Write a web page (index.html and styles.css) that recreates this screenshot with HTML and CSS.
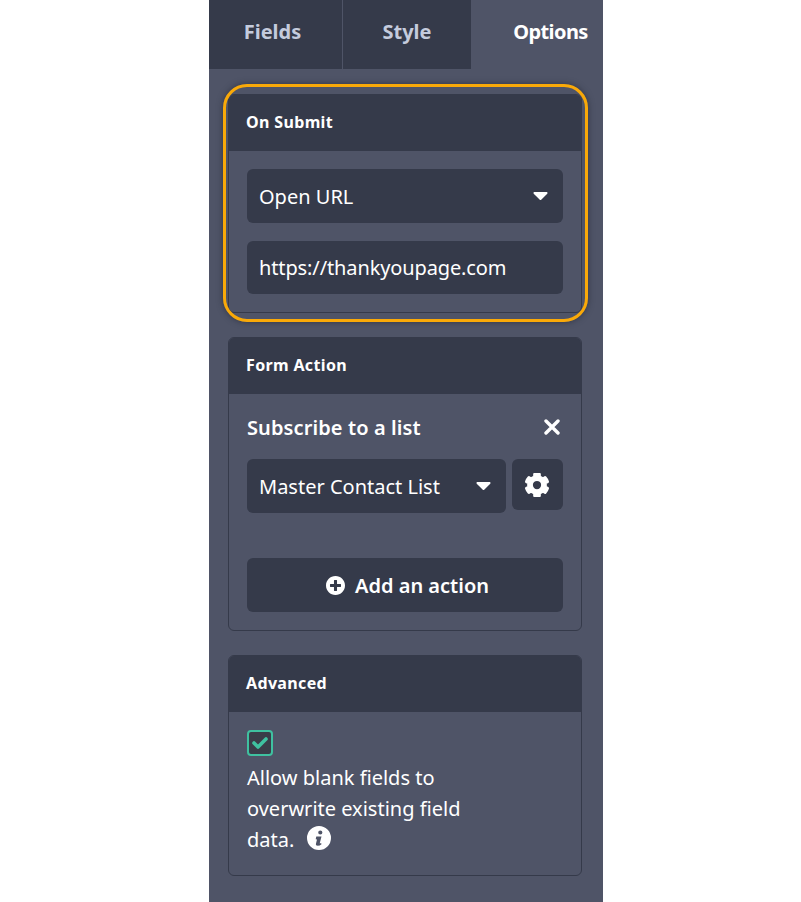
FILE: index.html
```html
<!DOCTYPE html>
<html lang="en">
  <head>
    <meta charset="UTF-8" />
    <meta name="viewport" content="width=device-width, initial-scale=1.0" />
    <title>Form Options</title>
    <link rel="stylesheet" href="styles.css">
  </head>
  <body>
    <div class="panel">
      <div class="tabs">
        <div class="tab tab-fields">Fields</div>
        <div class="tab tab-style">Style</div>
        <div class="tab tab-options">Options</div>
      </div>

      <div class="cards">
        <section class="card">
          <h3 class="card-title">On Submit</h3>
          <div class="card-body">
            <div class="field field-select">
              <span>Open URL</span>
              <svg class="caret" viewBox="0 0 16 9"><path d="M1.2 0h13.6c1 0 1.5 1.2.8 1.9L8.8 8.6c-.5.5-1.200.5-1.600 0L.4 1.900C-.3 1.200.2 0 1.200 0z"/></svg>
            </div>
            <div class="field field-url">https://thankyoupage.com</div>
          </div>
          <div class="highlight"></div>
        </section>

        <section class="card">
          <h3 class="card-title">Form Action</h3>
          <div class="card-body card-body-action">
            <div class="action-head">
              <strong>Subscribe to a list</strong>
              <svg class="icon-times" viewBox="0 0 16 16"><path d="M2 2l12 12M14 2L2 14"/></svg>
            </div>
            <div class="action-row">
              <div class="field field-select field-list">
                <span>Master Contact List</span>
                <svg class="caret" viewBox="0 0 16 9"><path d="M1.2 0h13.600c1 0 1.500 1.200.8 1.900L8.800 8.600c-.5.5-1.200.5-1.600 0L.4 1.900C-.3 1.200.2 0 1.200 0z"/></svg>
              </div>
              <div class="gear-btn">
                <svg class="icon-gear" viewBox="0 0 512 512"><path d="M487.4 315.7l-42.6-24.6c4.3-23.2 4.3-47 0-70.2l42.6-24.6c4.9-2.8 7.1-8.6 5.5-14-11.1-35.6-30-67.8-54.7-94.6-3.8-4.1-10-5.1-14.8-2.3L380.800 110c-17.900-15.400-38.500-27.300-60.800-35.100V25.800c0-5.600-3.900-10.500-9.400-11.700-36.700-8.200-74.300-7.800-109.200 0-5.500 1.200-9.400 6.100-9.400 11.700V75c-22.200 7.900-42.800 19.800-60.800 35.100L88.700 85.500c-4.900-2.800-11-1.900-14.800 2.300-24.700 26.700-43.600 58.900-54.700 94.600-1.700 5.400.6 11.200 5.500 14L67.300 221c-4.300 23.200-4.300 47 0 70.200l-42.600 24.600c-4.900 2.800-7.100 8.600-5.500 14 11.100 35.600 30 67.800 54.700 94.600 3.800 4.100 10 5.100 14.800 2.300l42.600-24.600c17.900 15.400 38.500 27.300 60.800 35.100v49.200c0 5.600 3.900 10.500 9.400 11.700 36.700 8.200 74.300 7.800 109.200 0 5.500-1.200 9.400-6.100 9.400-11.700v-49.200c22.200-7.900 42.800-19.800 60.800-35.100l42.600 24.600c4.900 2.800 11 1.900 14.800-2.300 24.700-26.700 43.600-58.900 54.700-94.600 1.500-5.500-.7-11.300-5.600-14.100zM256 362c-58.500 0-106-47.500-106-106s47.500-106 106-106 106 47.500 106 106-47.500 106-106 106z"/></svg>
              </div>
            </div>
            <div class="add-btn">
              <svg class="icon-plus" viewBox="8 8 496 496"><path d="M256 8C119 8 8 119 8 256s111 248 248 248 248-111 248-248S393 8 256 8zm144 276c0 6.600-5.400 12-12 12h-92v92c0 6.600-5.400 12-12 12h-56c-6.600 0-12-5.400-12-12v-92h-92c-6.600 0-12-5.400-12-12v-56c0-6.600 5.400-12 12-12h92v-92c0-6.600 5.400-12 12-12h56c6.600 0 12 5.400 12 12v92h92c6.600 0 12 5.400 12 12v56z"/></svg>
              <span>Add an action</span>
            </div>
          </div>
        </section>

        <section class="card">
          <h3 class="card-title">Advanced</h3>
          <div class="card-body card-body-advanced">
            <div class="checkbox">
              <svg class="icon-check" viewBox="0 0 16 12"><path d="M2 6l4 4 8-8"/></svg>
            </div>
            <p class="check-label">
              Allow blank fields to<br>overwrite existing field<br>data.
              <svg class="icon-info" viewBox="0 0 24 24"><path fill-rule="evenodd" d="M12 0a12 12 0 1 0 0 24 12 12 0 0 0 0-24zM13.300 4.400a2.100 2.100 0 1 1 0 4.200 2.100 2.100 0 0 1 0-4.200zM9.300 10.600h5.200l-1.700 6.300c-.1.500.3.600.7.400l.6-.3.400 1.300c-1.200 1-2.500 1.500-3.700 1.500-1.500 0-2.200-1-1.800-2.300l1-3.900-1.300-.4z"/></svg>
            </p>
          </div>
        </section>
      </div>
    </div>
  </body>
</html>
```

FILE: styles.css
```css
body {
  margin: 0;
  background-color: #fff;
  font-family: "Noto Sans", Arial, sans-serif;
  color: #fff;
}

svg {
  display: block;
  fill: #fff;
  flex-shrink: 0;
}

.panel {
  width: 394px;
  height: 902px;
  margin-left: 209px;
  background-color: #4f5467;
  overflow: hidden;
}

.tabs {
  display: flex;
  height: 69px;
}

.tab {
  display: flex;
  align-items: center;
  justify-content: center;
  font-size: 20px;
  font-weight: 700;
  padding-bottom: 6px;
  box-sizing: border-box;
  color: #c4cbdd;
  background-color: #353a4a;
}

.tab-fields {
  width: 134px;
  padding-right: 6px;
  border-right: 1px solid #4f5467;
}

.tab-style {
  width: 128px;
}

.tab-options {
  width: 132px;
  padding-left: 27px;
  letter-spacing: -0.6px;
  color: #fff;
  background-color: transparent;
}

.cards {
  display: flex;
  flex-direction: column;
  gap: 24px;
  padding: 25px 21px 0 19px;
}

.card {
  position: relative;
  border: 1px solid #353a4a;
  border-radius: 6px;
}

.card-title {
  height: 56px;
  box-sizing: border-box;
  margin: 0;
  padding: 0 0 3px 17px;
  display: flex;
  align-items: center;
  font-size: 16px;
  font-weight: 700;
  letter-spacing: 0.35px;
  background-color: #353a4a;
  border-radius: 5px 5px 0 0;
}

.card-body {
  display: flex;
  flex-direction: column;
  gap: 18px;
  padding: 18px;
}

.field {
  display: flex;
  align-items: center;
  justify-content: space-between;
  height: 53px;
  padding: 0 12px;
  font-size: 20px;
  background-color: #353a4a;
  border-radius: 6px;
}

.field-select {
  height: 54px;
  padding-right: 15px;
}

.field-url {
  letter-spacing: -0.12px;
}

.caret {
  width: 15px;
  height: 8px;
}

.highlight {
  position: absolute;
  top: -11px;
  right: -7px;
  bottom: -10px;
  left: -6px;
  border: 3px solid #f9a908;
  border-radius: 24px;
  box-shadow: 0 0 6px rgba(30, 33, 45, 0.6);
  pointer-events: none;
}

.card-body-action {
  gap: 0;
}

.action-head {
  display: flex;
  align-items: center;
  justify-content: space-between;
  height: 30px;
  margin-bottom: 17px;
  font-size: 20px;
  font-weight: 600;
}

.action-head strong {
  font-weight: 600;
  letter-spacing: 0.1px;
}

.icon-times {
  width: 16px;
  height: 16px;
  margin-right: 3px;
  stroke: #fff;
  stroke-width: 3.4;
  stroke-linecap: round;
}

.action-row {
  display: flex;
  align-items: flex-start;
  gap: 6px;
  margin-bottom: 45px;
}

.field-list {
  flex: 1;
  padding-right: 15px;
}

.gear-btn {
  display: flex;
  align-items: center;
  justify-content: center;
  width: 51px;
  height: 51px;
  padding: 0 1px 0 0;
  box-sizing: border-box;
  background-color: #353a4a;
  border-radius: 6px;
}

.icon-gear {
  width: 24px;
  height: 24px;
  stroke: #fff;
  stroke-width: 36;
  stroke-linejoin: round;
}

.add-btn {
  display: flex;
  align-items: center;
  justify-content: center;
  gap: 10px;
  height: 54px;
  padding-left: 5px;
  font-size: 20px;
  font-weight: 600;
  background-color: #353a4a;
  border-radius: 6px;
}

.icon-plus {
  width: 19px;
  height: 19px;
}

.card-body-advanced {
  gap: 6px;
  padding-bottom: 20px;
}

.checkbox {
  display: flex;
  align-items: center;
  justify-content: center;
  width: 26px;
  height: 26px;
  box-sizing: border-box;
  border: 2px solid #3fc1a0;
  border-radius: 4px;
  background-color: #3a3d49;
}

.icon-check {
  width: 16px;
  height: 12px;
  fill: none;
  stroke: #3fc1a0;
  stroke-width: 3.6;
  stroke-linecap: round;
  stroke-linejoin: round;
}

.check-label {
  margin: 0;
  font-size: 20px;
  line-height: 31px;
}

.icon-info {
  display: inline-block;
  width: 24px;
  height: 24px;
  margin-left: 7px;
  vertical-align: -3px;
}
```
